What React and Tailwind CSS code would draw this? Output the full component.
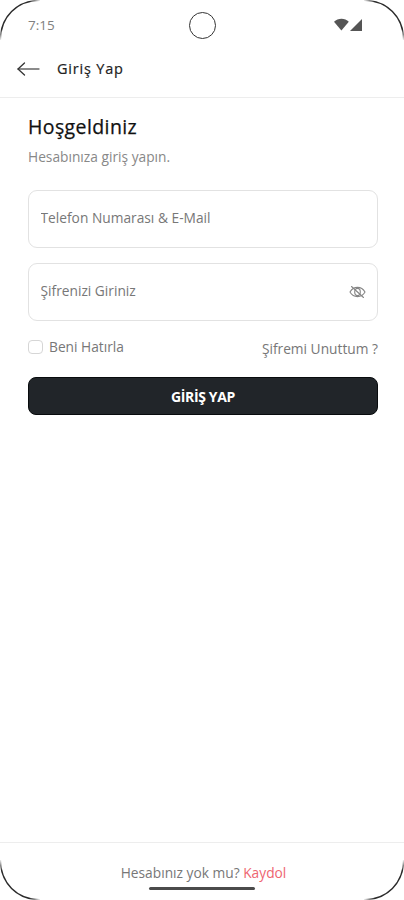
import React, { useState } from 'react'

// One corner curve, mirrored into the other three
function PhoneFrame() {
  const corner = 'M.4 40C.4 17 17 .4 40 .4'

  return (
    <svg className="absolute inset-0 pointer-events-none" width="404" height="900" viewBox="0 0 404 900" fill="none" stroke="url(#cornerFade)" strokeWidth="1.4">
      <defs>
        <radialGradient id="cornerFade" gradientUnits="userSpaceOnUse" cx="0" cy="0" r="41">
          <stop offset="0.72" stopColor="#2a2a2a" />
          <stop offset="1" stopColor="#2a2a2a" stopOpacity="0" />
        </radialGradient>
      </defs>
      <path d={corner} />
      <path d={corner} transform="translate(404 0) scale(-1 1)" />
      <path d={corner} transform="translate(0 900) scale(1 -1)" />
      <path d={corner} transform="translate(404 900) scale(-1 -1)" />
    </svg>
  )
}

function StatusBar() {
  return (
    <div className="flex h-[50px] items-center justify-between pl-[28px] pr-[41px]">
      <span className="w-[60px] text-[13.5px] leading-5 text-[#808080]">7:15</span>
      <div className="ml-[14px] h-[27px] w-[27px] rounded-full border-[1.5px] border-[#333]" />
      <svg className="ml-[31px]" width="29" height="14" viewBox="0 0 29 14" fill="#555">
        <path d="M0 3.800C4-.2 11-.2 14.800 3.800L7.400 12.500Z" />
        <path d="M28 1V13H16Z" />
      </svg>
    </div>
  )
}

function Header() {
  return (
    <header className="flex h-[48px] items-center border-b border-[#ededed] pb-[9px] pl-[17px]">
      <svg width="23" height="16" viewBox="0 0 23 16" fill="none" strokeLinecap="round" strokeLinejoin="round">
        <path d="M1 8H22" stroke="#666" strokeWidth="1.300" />
        <path d="M7.500 2L1 8L7.500 14" stroke="#333" strokeWidth="1.300" />
      </svg>
      <h1 className="ml-[17px] text-[14.5px] leading-5 font-medium tracking-[0.8px] text-[#222] [-webkit-text-stroke:0.2px_#222]">Giriş Yap</h1>
    </header>
  )
}

function EyeOff() {
  return (
    <svg width="17" height="14" viewBox="0 0 17 14" fill="none" stroke="#858585" strokeWidth="1.1" strokeLinecap="round">
      <path d="M1 7C4.500 .8 12.500 .8 16 7C12.500 13.200 4.500 13.200 1 7Z" />
      <ellipse cx="8.500" cy="7" rx="2.800" ry="3.600" />
      <path d="M2.500 1.500L14.500 12.500" />
    </svg>
  )
}

function Field({ label, type, children }) {
  return (
    <div className="flex h-[58px] items-center rounded-[9px] border border-[#e2e2e2] pb-[3px] pl-[11.5px] pr-[11px]">
      <input
        type={type}
        placeholder={label}
        className="min-w-0 flex-1 bg-transparent text-[13.75px] leading-5 text-[#666] outline-none placeholder:text-[#777]"
      />
      {children}
    </div>
  )
}

export default function App() {
  const [showPassword, setShowPassword] = useState(false)

  return (
    <div className="relative flex h-[900px] w-[404px] flex-col overflow-hidden bg-white font-['Open_Sans','Noto_Sans',sans-serif]">
      <StatusBar />
      <Header />

      <main className="flex flex-1 flex-col px-[28px] pt-[15px]">
        <h2 className="text-[19.5px] leading-7 font-medium tracking-[0.4px] text-[#111] [-webkit-text-stroke:0.25px_#111]">Hoşgeldiniz</h2>
        <p className="mt-[6px] text-[13.75px] leading-5 text-[#888]">Hesabınıza giriş yapın.</p>

        <div className="mt-[23px] flex w-[350px] flex-col gap-[15px]">
          <Field label="Telefon Numarası &amp; E-Mail" type="text" />
          <Field label="Şifrenizi Giriniz" type={showPassword ? 'text' : 'password'}>
            <button type="button" className="pt-[3px]" onClick={() => setShowPassword(!showPassword)}>
              <EyeOff />
            </button>
          </Field>
        </div>

        <div className="mt-[16px] flex w-[350px] items-start justify-between text-[13.75px] leading-5 text-[#777]">
          <label className="flex items-center gap-[6px]">
            <input type="checkbox" className="h-[14px] w-[15px] appearance-none rounded-[4px] border border-[#d6d6d6]" />
            <span>Beni Hatırla</span>
          </label>
          <a className="mt-[2px]">Şifremi Unuttum ?</a>
        </div>

        <button type="button" className="mt-[18px] h-[38px] w-[350px] rounded-[8px] border border-[#080b0d] bg-[#212529] text-[14px] font-bold tracking-[-0.35px] text-white">
          GİRİŞ YAP
        </button>
      </main>

      <footer className="flex h-[58px] flex-col items-center border-t border-[#ededed] pt-[20px]">
        <p className="ml-[3px] text-[13.75px] leading-5 text-[#777]">
          Hesabınız yok mu? <a className="text-[#ee6570]">Kaydol</a>
        </p>
        <div className="mt-[4px] h-[3px] w-[106px] rounded-full bg-[#4b4b4b]" />
      </footer>

      <PhoneFrame />
    </div>
  )
}
